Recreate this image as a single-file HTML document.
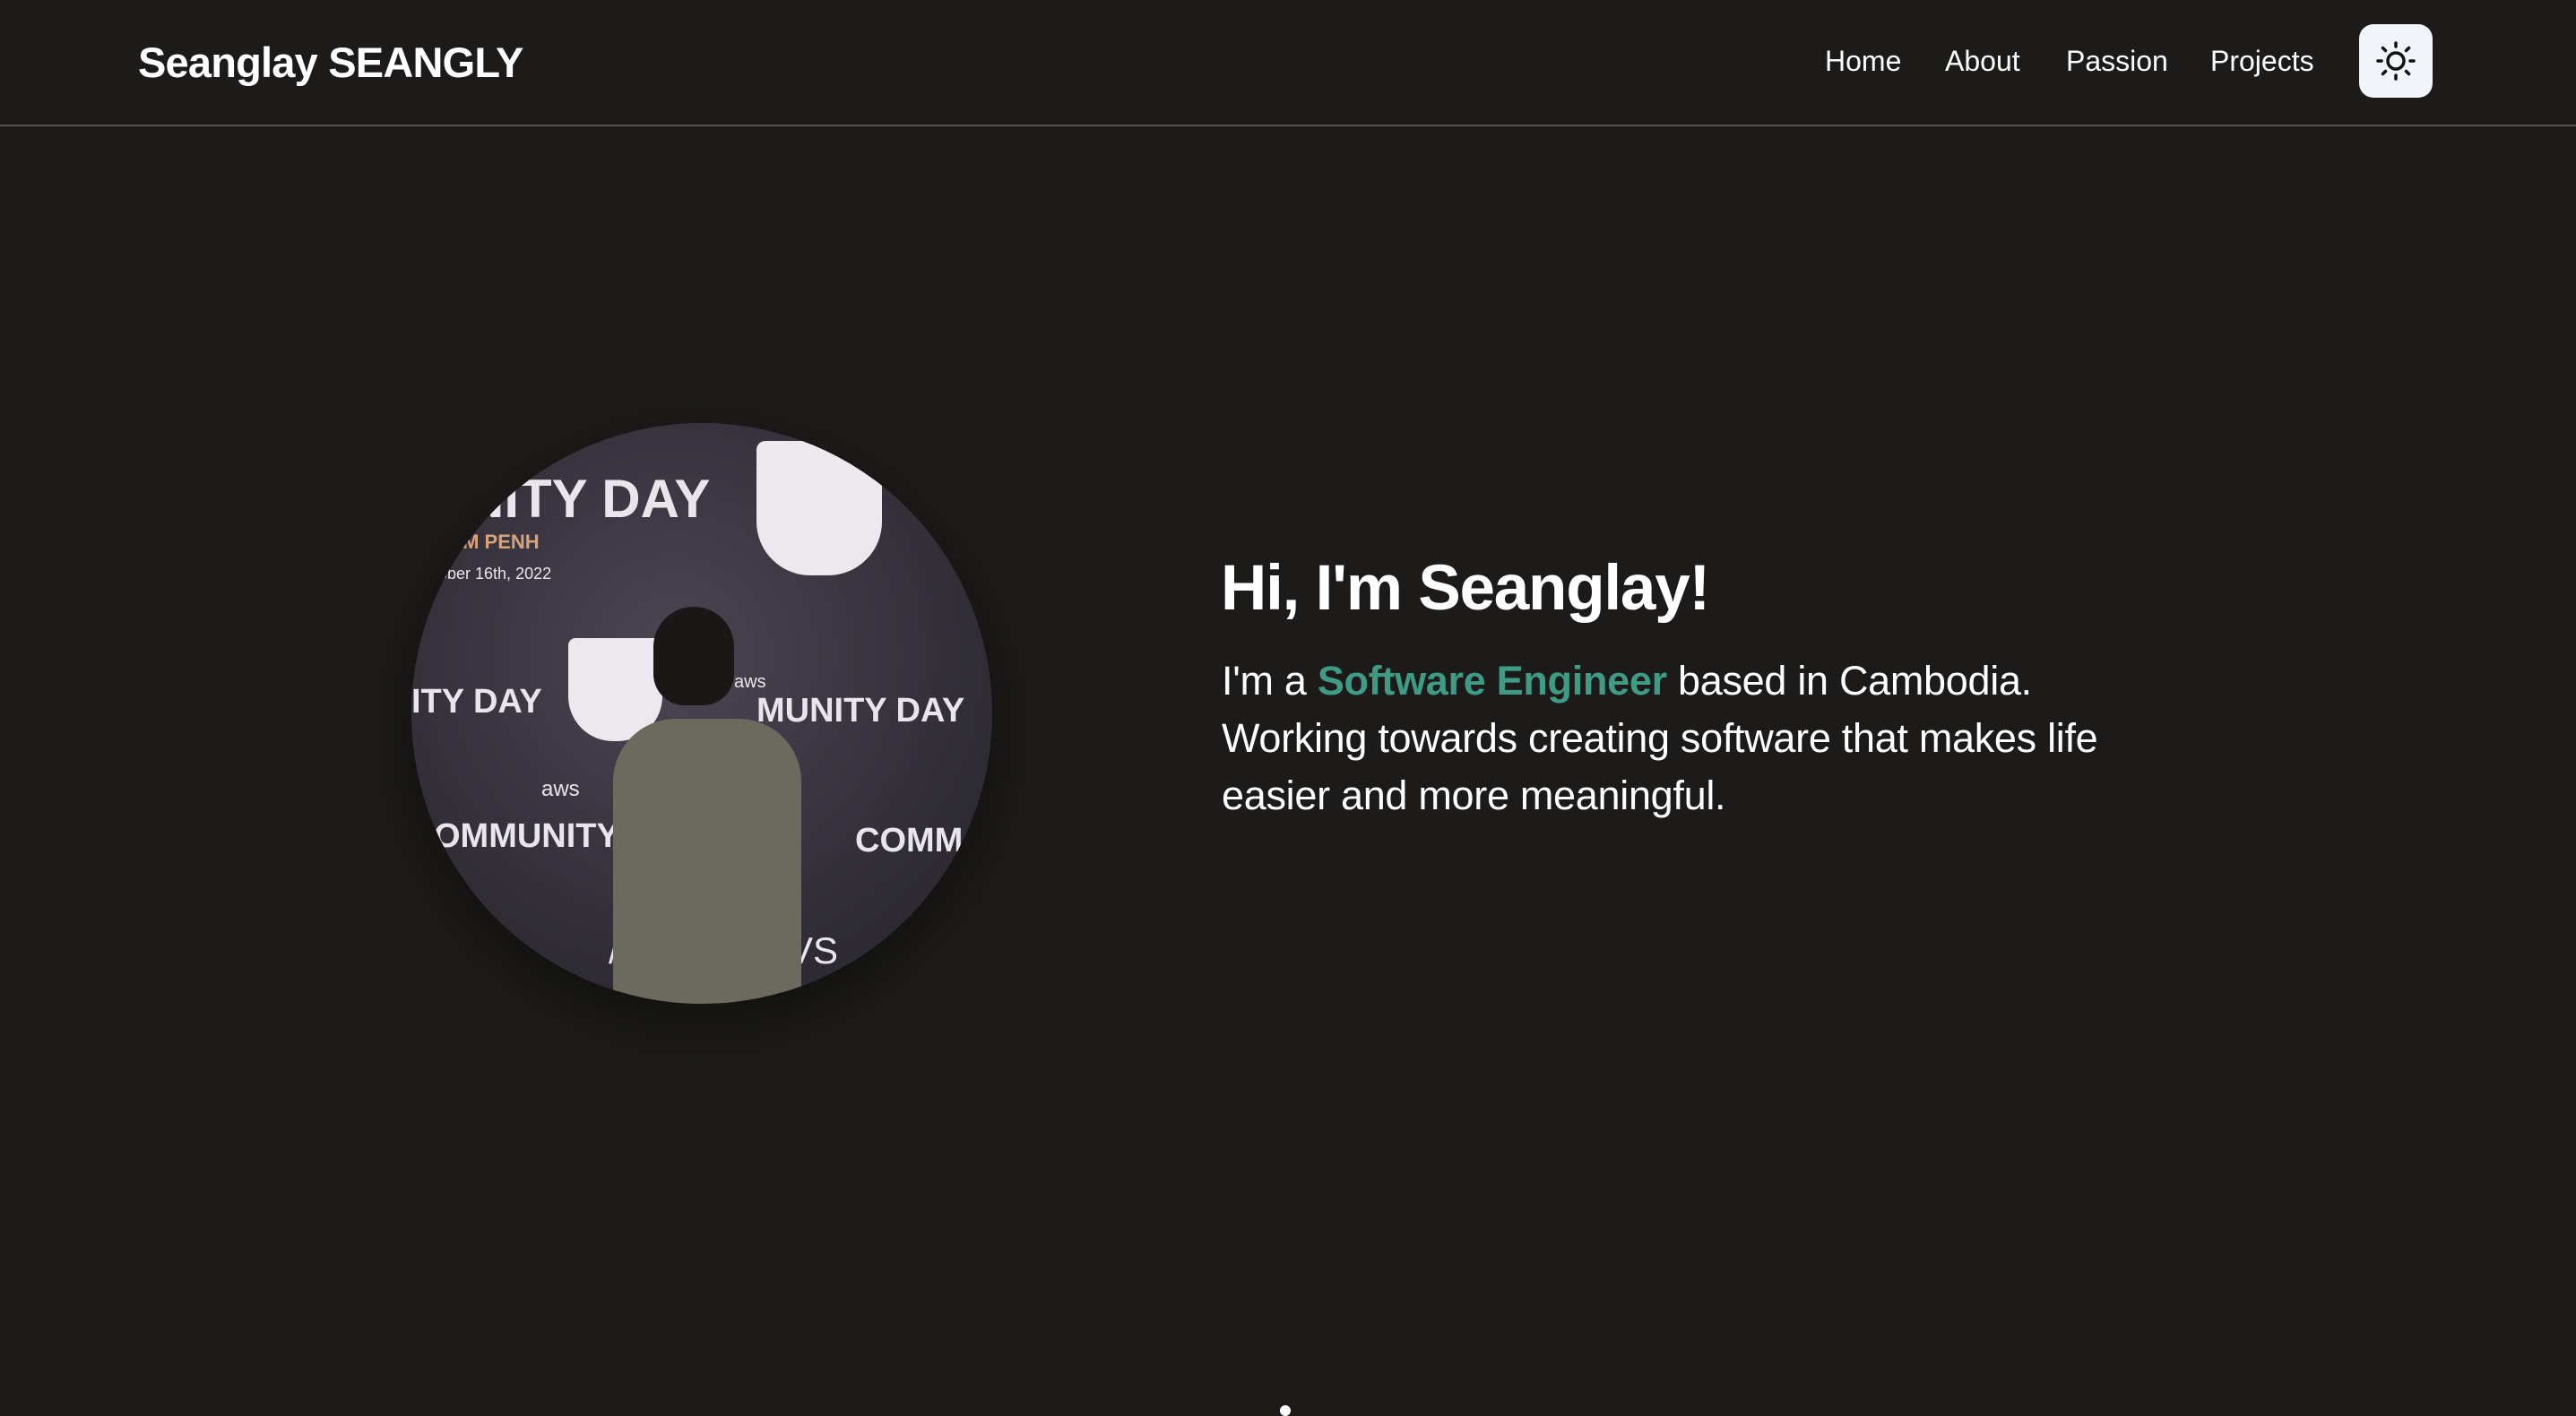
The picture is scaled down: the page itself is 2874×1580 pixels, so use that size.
<!DOCTYPE html>
<html><head><meta charset="utf-8"><style>
html,body{margin:0;padding:0;background:#1c1b19;width:2874px;height:1574px;overflow:hidden;font-family:"Liberation Sans",sans-serif;color:#fff}
.hdr{position:absolute;left:0;top:0;width:2874px;height:139px;border-bottom:2px solid #55544f}
.logo{position:absolute;left:154px;top:42px;font-size:47px;font-weight:bold;letter-spacing:-0.8px}
.nav{position:absolute;top:50px;font-size:32px}
.btn{position:absolute;left:2632px;top:27px;width:82px;height:82px;border-radius:16px;background:#f1f4f8}
.pic{position:absolute;left:459px;top:472px;width:648px;height:648px;border-radius:50%;overflow:hidden;background:radial-gradient(circle at 45% 40%,#4a4652,#2e2b35 70%,#25232b);box-shadow:0 20px 60px rgba(0,0,0,.4)}
.pic span{position:absolute;color:#e8e6ea;font-weight:bold;white-space:nowrap}
h1{position:absolute;left:1362px;top:616px;margin:0;font-size:71px;font-weight:bold;letter-spacing:-1.2px}
p{position:absolute;left:1363px;top:728px;margin:0;font-size:45px;line-height:64px;white-space:nowrap;letter-spacing:-0.3px}
.t{color:#3f9a86;font-weight:bold}
</style></head><body>
<div class="hdr">
<div class="logo">Seanglay SEANGLY</div>
<div class="nav" style="left:2036px">Home</div>
<div class="nav" style="left:2170px">About</div>
<div class="nav" style="left:2305px">Passion</div>
<div class="nav" style="left:2466px">Projects</div>
<div class="btn"><svg width="82" height="82" viewBox="0 0 82 82"><g stroke="#111" stroke-width="3.5" fill="none" stroke-linecap="round"><circle cx="41" cy="41" r="9"/><path d="M41 21v4M41 57v4M21 41h4M57 41h4M26.5 26.5l3 3M52.5 52.5l3 3M26.5 55.5l3-3M52.5 29.5l3-3"/></g></svg></div>
</div>
<div class="pic">
<span style="left:60px;top:50px;font-size:60px">NITY DAY</span>
<span style="left:40px;top:120px;font-size:22px;color:#d9a27a">OM PENH</span>
<span style="left:30px;top:158px;font-size:18px;font-weight:normal">ober 16th, 2022</span>
<div style="position:absolute;left:385px;top:20px;width:140px;height:150px;background:#ece9ee;border-radius:10px 10px 60px 60px"></div>
<span style="left:0;top:290px;font-size:38px">ITY DAY</span>
<div style="position:absolute;left:175px;top:240px;width:105px;height:115px;background:#ece9ee;border-radius:8px 8px 50px 50px"></div>
<span style="left:360px;top:278px;font-size:20px;font-weight:normal">aws</span>
<span style="left:385px;top:300px;font-size:38px">MUNITY DAY</span>
<span style="left:145px;top:395px;font-size:24px;font-weight:normal">aws</span>
<span style="left:25px;top:440px;font-size:38px">OMMUNITY</span>
<span style="left:495px;top:445px;font-size:38px">COMM</span>
<span style="left:220px;top:565px;font-size:42px;font-weight:normal">/sl</span>
<span style="left:420px;top:565px;font-size:42px;font-weight:normal">VS</span>
<div style="position:absolute;left:270px;top:205px;width:90px;height:110px;background:#1a1716;border-radius:45px 45px 35px 35px"></div>
<div style="position:absolute;left:225px;top:330px;width:210px;height:330px;background:#6a6a5e;border-radius:70px 70px 0 0"></div>
</div>
<h1>Hi, I'm Seanglay!</h1>
<p>I'm a <span class="t">Software Engineer</span> based in Cambodia.<br>Working towards creating software that makes life<br>easier and more meaningful.</p>
<div style="position:absolute;left:1428px;top:1568px;width:12px;height:12px;border-radius:50%;background:#fff"></div>
</body></html>
